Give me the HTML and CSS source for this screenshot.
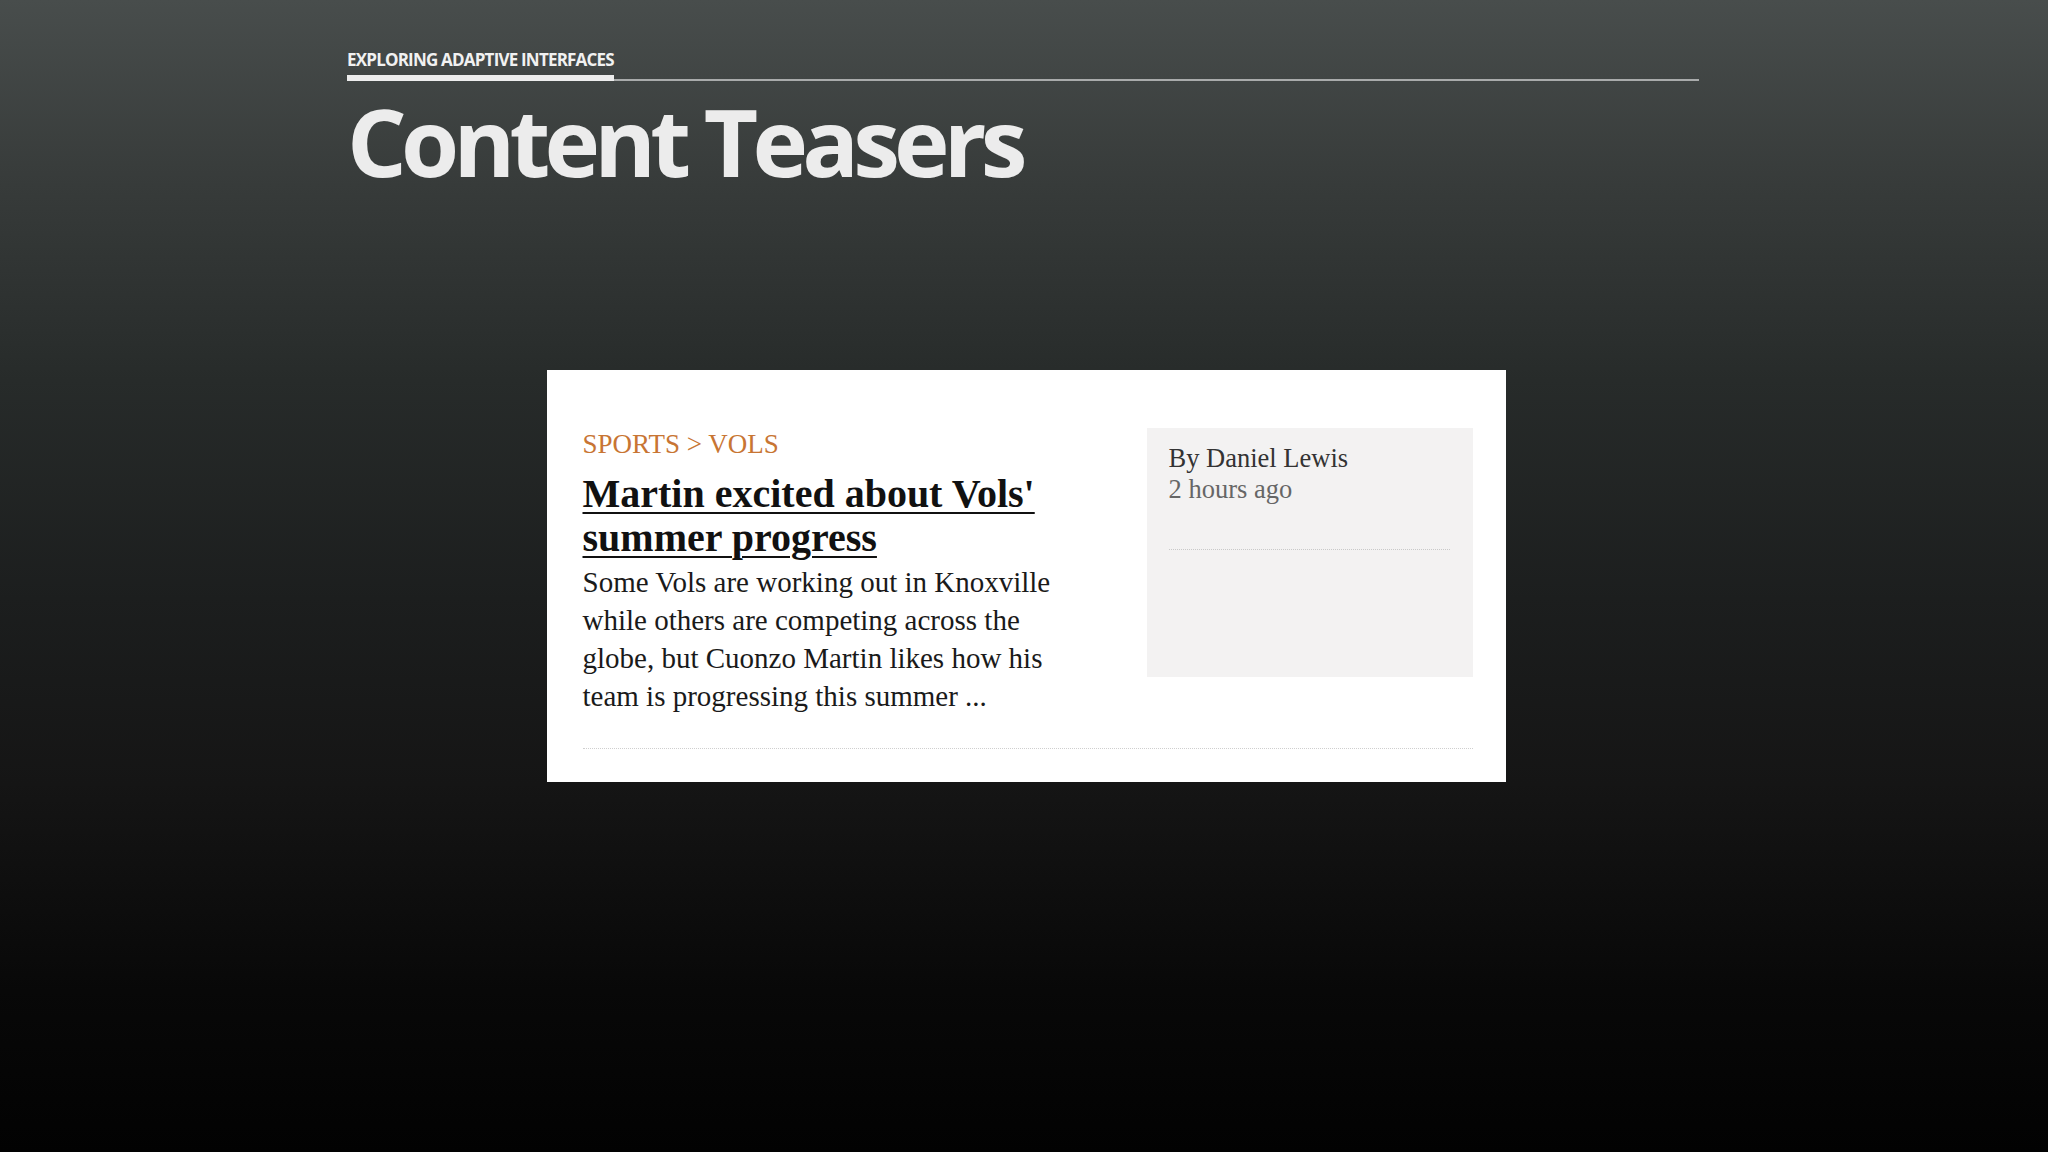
FILE: index.html
```html
<!DOCTYPE html>
<html lang="en">
<head>
<meta charset="utf-8">
<title>Content Teasers</title>
<link rel="stylesheet" href="styles.css">
</head>
<body>
<div class="slide">
  <header class="slide-head">
    <div class="kicker-row">
      <span class="kicker">EXPLORING ADAPTIVE INTERFACES</span>
      <span class="kicker-rule"></span>
    </div>
    <h1 class="slide-title">Content Teasers</h1>
  </header>
  <main class="stage">
    <article class="teaser">
      <div class="teaser-body">
        <div class="teaser-main">
          <div class="teaser-cat">SPORTS &gt; VOLS</div>
          <h2 class="teaser-title"><a href="#">Martin excited about Vols' summer progress</a></h2>
          <p class="teaser-text">Some Vols are working out in Knoxville while others are competing across the globe, but Cuonzo Martin likes how his team is progressing this summer ...</p>
        </div>
        <aside class="teaser-meta">
          <div class="meta-lines">
            <div class="meta-author">By Daniel Lewis</div>
            <div class="meta-time">2 hours ago</div>
          </div>
        </aside>
      </div>
      <div class="teaser-rule"></div>
    </article>
  </main>
</div>
</body>
</html>
```
FILE: styles.css
```css
html, body {
  margin: 0;
  padding: 0;
}
body {
  width: 2048px;
  height: 1152px;
  overflow: hidden;
  background: linear-gradient(to bottom, #484d4c 0%, #373b3a 16%, #272b2a 33%, #1c1e1e 52%, #151515 68%, #080808 86%, #020202 100%);
  font-family: "Open Sans", "Liberation Sans", sans-serif;
}
.slide {
  padding: 0 349px 0 347px;
}
.slide-head {
  padding-top: 50px;
}
.kicker-row {
  display: flex;
  align-items: flex-end;
}
.kicker {
  display: block;
  font-weight: 700;
  font-size: 17px;
  line-height: 20px;
  color: #f1f1f1;
  letter-spacing: -0.8px;
  padding-bottom: 5px;
  border-bottom: 6px solid #ededed;
  white-space: nowrap;
}
.kicker-rule {
  flex: 1;
  border-bottom: 2px solid #a9abab;
}
.slide-title {
  margin: 13px 0 0;
  font-weight: 700;
  font-size: 94px;
  line-height: 95px;
  letter-spacing: -5.8px;
  color: #ececec;
}
.stage {
  display: flex;
  justify-content: center;
  padding: 181px 0 0 6px;
}
.teaser {
  width: 959px;
  box-sizing: border-box;
  background: #ffffff;
  padding: 58px 33px 33px 36px;
  font-family: "Liberation Serif", "Times New Roman", serif;
}
.teaser-body {
  display: grid;
  grid-template-columns: 1fr 326px;
  column-gap: 84px;
  align-items: start;
}
.teaser-cat {
  font-size: 27px;
  line-height: 32px;
  color: #c87533;
}
.teaser-title {
  margin: 12px 0 3px;
  font-size: 40px;
  line-height: 44px;
  font-weight: 700;
}
.teaser-title a {
  color: #111111;
  text-decoration: underline;
  text-decoration-thickness: 2px;
  text-underline-offset: 5px;
}
.teaser-text {
  margin: 0;
  font-size: 29px;
  line-height: 38px;
  color: #1a1a1a;
}
.teaser-meta {
  height: 249px;
  box-sizing: border-box;
  background: #f3f2f2;
  padding: 15px 23px 0 22px;
}
.meta-lines {
  font-size: 26.5px;
  line-height: 31px;
  padding-bottom: 44px;
  border-bottom: 1px dotted #c9c9c9;
}
.meta-author {
  color: #333333;
}
.meta-time {
  color: #666666;
}
.teaser-rule {
  margin-top: 33px;
  border-top: 1px dotted #cfcfcf;
}
```
